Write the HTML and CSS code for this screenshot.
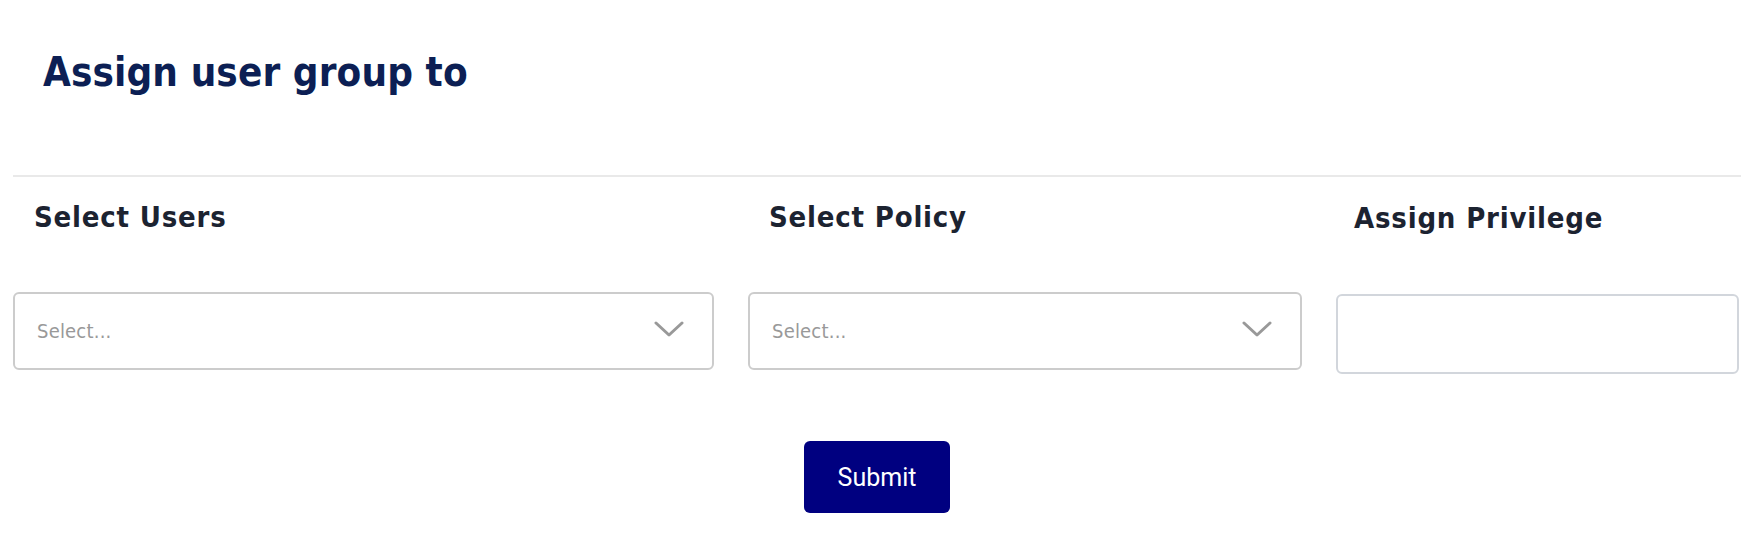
FILE: index.html
```html
<!DOCTYPE html>
<html lang="en">
<head>
<meta charset="utf-8">
<title>Assign user group</title>
<link rel="stylesheet" href="styles.css">
</head>
<body>
<div class="page">
  <header class="header">
    <h1 class="title">Assign user group to</h1>
  </header>
  <div class="divider"></div>
  <div class="fields">
    <div class="field field-users">
      <div class="label">Select Users</div>
      <div class="select">
        <span class="placeholder">Select...</span>
        <svg class="chevron" width="30" height="16" viewBox="0 0 30 16"><path d="M2 2 L15 14 L28 2" fill="none" stroke="#999" stroke-width="3" stroke-linecap="round" stroke-linejoin="round"/></svg>
      </div>
    </div>
    <div class="field field-policy">
      <div class="label">Select Policy</div>
      <div class="select">
        <span class="placeholder">Select...</span>
        <svg class="chevron" width="30" height="16" viewBox="0 0 30 16"><path d="M2 2 L15 14 L28 2" fill="none" stroke="#999" stroke-width="3" stroke-linecap="round" stroke-linejoin="round"/></svg>
      </div>
    </div>
    <div class="field field-privilege">
      <div class="label label-privilege">Assign Privilege</div>
      <div class="input"></div>
    </div>
  </div>
  <div class="actions">
    <button class="submit" type="button">Submit</button>
  </div>
</div>
</body>
</html>
```
FILE: styles.css
```css
* { box-sizing: border-box; }
html, body { margin: 0; padding: 0; background: #ffffff; }
body { font-family: "DejaVu Sans Condensed", "DejaVu Sans", sans-serif; font-stretch: condensed; }

.page { padding: 0 9px 0 13px; width: 1750px; }

.header { padding-top: 48px; height: 175px; }
.title {
  margin: 0 0 0 30px;
  font-size: 40px;
  line-height: 48px;
  font-weight: bold;
  color: #0c1f54;
  letter-spacing: 0.1px;
}

.divider { height: 2px; background: #e9e9e9; }

.fields { display: flex; gap: 34px; margin-top: 24px; }
.field-users { width: 701px; }
.field-policy { width: 554px; }
.field-privilege { width: 403px; }

.label {
  padding-left: 21px;
  font-size: 29px;
  line-height: 32px;
  font-weight: bold;
  color: #1c2331;
  height: 32px;
  letter-spacing: 0.8px;
}
.label-privilege { padding-left: 18px; margin-top: 1px; }

.select {
  margin-top: 59px;
  height: 78px;
  border: 2px solid #cccccc;
  border-radius: 6px;
  display: flex;
  align-items: center;
  justify-content: space-between;
  padding: 0 28px 0 22px;
}
.placeholder { font-size: 20px; color: #999999; letter-spacing: 0.2px; }
.chevron { display: block; margin-top: -4px; }

.input {
  margin-top: 60px;
  height: 80px;
  border: 2px solid #d2d6dc;
  border-radius: 6px;
}

.actions { display: flex; justify-content: center; margin-top: 67px; }
.submit {
  width: 146px;
  height: 72px;
  border: none;
  border-radius: 6px;
  background: #000080;
  color: #ffffff;
  font-family: Roboto, "Liberation Sans", sans-serif;
  font-size: 25px;
  font-weight: 400;
}
```
